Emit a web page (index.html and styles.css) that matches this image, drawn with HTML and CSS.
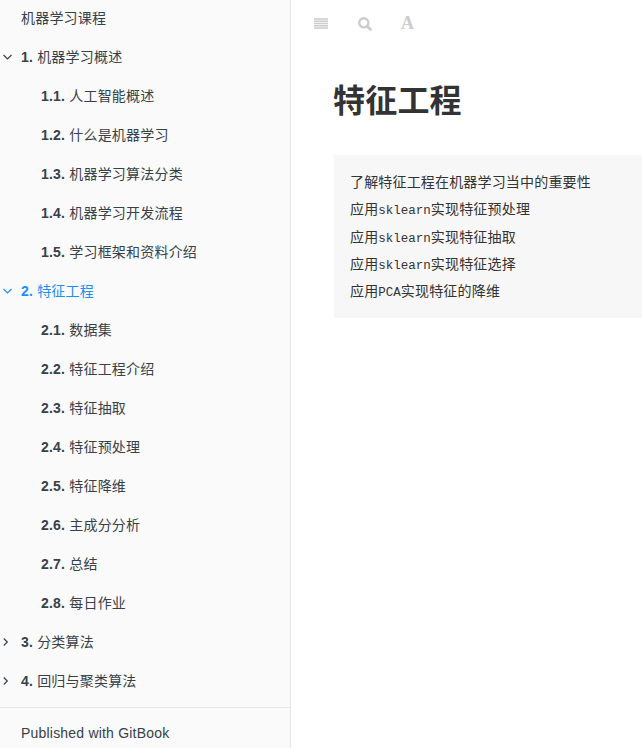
FILE: index.html
```html
<!DOCTYPE html>
<html lang="zh">
<head>
<meta charset="utf-8">
<title>特征工程</title>
<link rel="stylesheet" href="styles.css">
</head>
<body>
<div class="book">
  <aside class="summary">
    <nav class="nav">
      <a class="row">机器学习课程</a>
      <a class="row"><svg class="chev" viewBox="0 0 10 10"><path d="M.5 3l4 4 4-4"/></svg><b>1.</b> 机器学习概述</a>
      <a class="row sub"><b>1.1.</b> 人工智能概述</a>
      <a class="row sub"><b>1.2.</b> 什么是机器学习</a>
      <a class="row sub"><b>1.3.</b> 机器学习算法分类</a>
      <a class="row sub"><b>1.4.</b> 机器学习开发流程</a>
      <a class="row sub"><b>1.5.</b> 学习框架和资料介绍</a>
      <a class="row active"><svg class="chev" viewBox="0 0 10 10"><path d="M.5 3l4 4 4-4"/></svg><b>2.</b> 特征工程</a>
      <a class="row sub"><b>2.1.</b> 数据集</a>
      <a class="row sub"><b>2.2.</b> 特征工程介绍</a>
      <a class="row sub"><b>2.3.</b> 特征抽取</a>
      <a class="row sub"><b>2.4.</b> 特征预处理</a>
      <a class="row sub"><b>2.5.</b> 特征降维</a>
      <a class="row sub"><b>2.6.</b> 主成分分析</a>
      <a class="row sub"><b>2.7.</b> 总结</a>
      <a class="row sub"><b>2.8.</b> 每日作业</a>
      <a class="row"><svg class="chev" viewBox="0 0 10 10"><path d="M.8 1.500l3.500 3.500-3.500 3.500"/></svg><b>3.</b> 分类算法</a>
      <a class="row"><svg class="chev" viewBox="0 0 10 10"><path d="M.8 1.500l3.500 3.500-3.500 3.500"/></svg><b>4.</b> 回归与聚类算法</a>
    </nav>
    <div class="divider"></div>
    <a class="row published">Published with GitBook</a>
  </aside>
  <main class="page">
    <header class="toolbar">
      <svg class="tool menu" viewBox="0 0 14 11"><path d="M0 1h14M0 3.250h14M0 5.500h14M0 7.750h14M0 10h14"/></svg>
      <svg class="tool search" viewBox="0 0 14 14"><circle cx="5.800" cy="5.800" r="4.600"/><path class="handle" d="M9.200 9.200l4 4"/></svg>
      <span class="tool font">A</span>
    </header>
    <article class="content">
      <h1 class="title">特征工程</h1>
      <blockquote class="quote">
        <p>了解特征工程在机器学习当中的重要性</p>
        <p>应用<code>sklearn</code>实现特征预处理</p>
        <p>应用<code>sklearn</code>实现特征抽取</p>
        <p>应用<code>sklearn</code>实现特征选择</p>
        <p>应用<code>PCA</code>实现特征的降维</p>
      </blockquote>
    </article>
  </main>
</div>
</body>
</html>
```
FILE: styles.css
```css
* { box-sizing: border-box; }
html, body { margin: 0; height: 100%; overflow: hidden; }
body {
  font-family: "Liberation Sans", "Noto Sans CJK SC", sans-serif;
  font-size: 14px;
  color: #333;
  background: #fff;
}
.book { display: flex; height: 748px; }
.summary {
  flex: 0 0 291px;
  background: #fafafa;
  border-right: 1px solid #e5e5e5;
  overflow: hidden;
}
.nav { display: flex; flex-direction: column; margin-top: -1px; }
.row {
  position: relative;
  display: block;
  height: 39px;
  line-height: 39px;
  padding-left: 21px;
  color: #364149;
  letter-spacing: .2px;
  white-space: nowrap;
}
.row b { font-weight: 700; }
.sub { padding-left: 41px; }
.active { color: #1890ff; }
.chev {
  position: absolute;
  left: 3px;
  top: 14px;
  width: 10px;
  height: 10px;
  fill: none;
  stroke: currentColor;
  stroke-width: 1.200;
}
.divider { height: 1px; background: #e5e5e5; margin-top: 6px; }
.published { height: 50px; line-height: 50px; }
.page { flex: 1; min-width: 0; }
.toolbar { display: flex; align-items: center; height: 46px; padding-left: 23px; }
.tool { display: block; flex: none; }
.menu { width: 14px; height: 11px; stroke: #ccc; stroke-width: 1.500; fill: none; }
.search { width: 14px; height: 14px; margin-left: 30px; margin-top: 1px; fill: none; stroke: #ccc; stroke-width: 2.400; }
.handle { stroke-width: 2.800; }
.font {
  margin-left: 29px;
  font: 700 18px/18px "Liberation Serif", serif;
  color: #ccc;
}
.content { padding-left: 43px; }
.title {
  margin: 30px 0 0;
  height: 50px;
  line-height: 50px;
  font-size: 32px;
  font-weight: 700;
  color: #333;
  text-indent: -1px;
  letter-spacing: .2px;
}
.quote {
  margin: 29px 0 0;
  padding: 14.300px 16px 0;
  background: #f7f7f7;
  color: #333;
  height: 163.200px;
}
.quote p { margin: 0; height: 27.200px; line-height: 27.200px; letter-spacing: .17px; white-space: nowrap; }
code { font-family: "Liberation Mono", monospace; font-size: 12.500px; letter-spacing: 0; }
```
